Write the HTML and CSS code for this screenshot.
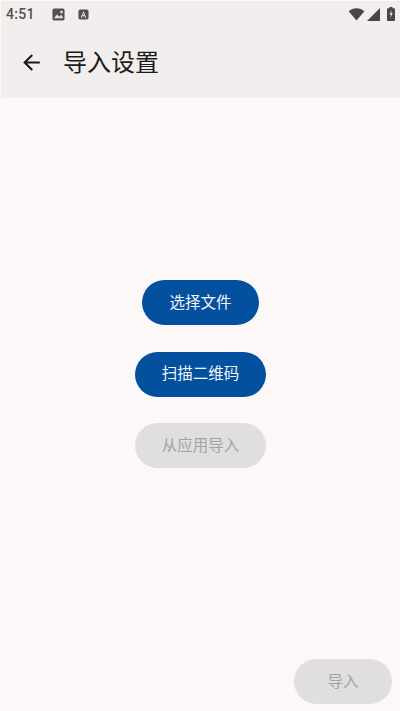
FILE: index.html
```html
<!DOCTYPE html>
<html lang="zh">
<head>
<meta charset="utf-8">
<title>导入设置</title>
<link rel="stylesheet" href="styles.css">
</head>
<body>
<div class="page">
  <header class="appbar">
    <div class="status">
      <span class="time">4:51</span>
      <svg class="note" viewBox="0 0 14 14"><rect x="0.5" y="0.5" width="13" height="13" rx="2" fill="#55504f"/><path d="M2 11l3.5-4 2.5 2.5 2-2.5 2 4z" fill="#e8e6e5"/><rect x="9" y="3" width="2.5" height="2.5" fill="#e8e6e5"/></svg>
      <svg class="note second" viewBox="0 0 12 12"><rect x="0.5" y="0.5" width="11" height="11" rx="2" fill="#55504f"/><path d="M3 9.5L6 2.5l3 7H7.8L7.3 8H4.7l-.5 1.5zM5.2 6.7h1.6L6 4.6z" fill="#f0eeed"/></svg>
      <span class="spacer"></span>
      <svg class="wifi" viewBox="0 0 18 14"><path d="M0.5 3.5C5.5-.7 12.5-.7 17.5 3.5L9 13.5z" fill="#4a4645"/></svg>
      <svg class="signal" viewBox="0 0 13 13"><path d="M13 0v13H0z" fill="#4a4645"/></svg>
      <svg class="battery" viewBox="0 0 8 14"><path d="M2.5 0h3v1.2H7a1 1 0 0 1 1 1V13a1 1 0 0 1-1 1H1a1 1 0 0 1-1-1V2.200a1 1 0 0 1 1-1h1.500z" fill="#4a4645"/><path d="M4.600 3L2.500 7.600h1.400L3.400 11l2.200-4.800H4.200z" fill="#f0eeed"/></svg>
    </div>
    <div class="toolbar">
      <svg class="back" viewBox="0 0 24 24"><path d="M20 11H7.830l5.590-5.590L12 4l-8 8 8 8 1.410-1.410L7.830 13H20z" fill="#1c1b1b"/></svg>
      <h1 class="title">导入设置</h1>
    </div>
  </header>
  <main class="actions">
    <button class="btn primary">选择文件</button>
    <button class="btn primary">扫描二维码</button>
    <button class="btn disabled">从应用导入</button>
  </main>
  <footer class="footer">
    <button class="btn disabled import">导入</button>
  </footer>
</div>
</body>
</html>
```
FILE: styles.css
```css
* { box-sizing: border-box; }
html, body { margin: 0; padding: 0; }
body {
  background: #fcf8f7;
  font-family: "Roboto", "Noto Sans CJK SC", sans-serif;
}
.page {
  display: flex;
  flex-direction: column;
  width: 400px;
  height: 711px;
  overflow: hidden;
}
.appbar {
  height: 97px;
  margin: 1px 0 0 1px;
  background: #f1eeed;
  flex: none;
}
.status {
  display: flex;
  align-items: center;
  height: 26px;
  padding: 0 5px 0 5px;
  color: #55504f;
}
.time { font-size: 14px; font-weight: 500; letter-spacing: 0.3px; }
.note { width: 13px; height: 13px; margin-left: 17px; }
.note.second { width: 11px; height: 11px; margin-left: 13px; }
.spacer { flex: 1; }
.wifi { width: 17px; height: 13px; }
.signal { width: 13px; height: 13px; margin-left: 2px; }
.battery { width: 8px; height: 14px; margin-left: 7px; }
.toolbar {
  display: flex;
  align-items: center;
  height: 71px;
  padding: 0 0 0 18px;
}
.back { width: 25px; height: 25px; }
.title {
  margin: 0 0 0 19px;
  font-size: 24px;
  font-weight: 400;
  color: #1c1b1b;
  line-height: 32px;
}
.actions {
  flex: 1;
  display: flex;
  flex-direction: column;
  align-items: center;
  justify-content: center;
  gap: 26.500px;
  padding: 2px 0 0 1px;
}
.btn {
  height: 45px;
  padding: 0 27px;
  border: 0;
  border-radius: 23px;
  font-family: inherit;
  font-size: 15.500px;
  font-weight: 400;
  line-height: 20px;
}
.primary { background: #03509f; color: #f4f6fa; }
.disabled { background: #e0dfde; color: #a5a3a2; }
.footer {
  display: flex;
  justify-content: flex-end;
  flex: none;
  height: 63px;
  padding: 11px 8px 7px 0;
}
.import { width: 98px; padding: 0; }
```
